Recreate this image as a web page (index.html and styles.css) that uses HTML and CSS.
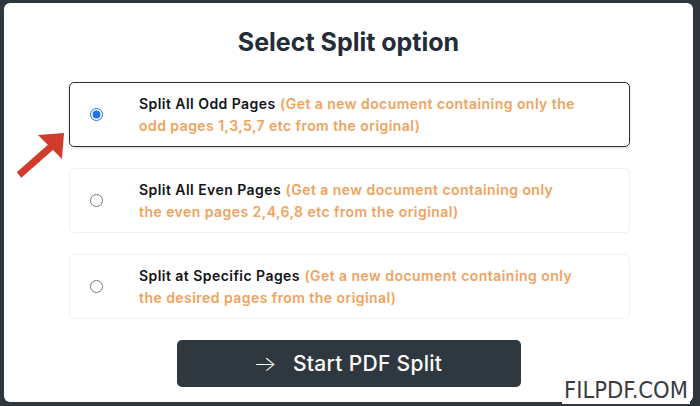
FILE: index.html
```html
<!DOCTYPE html>
<html lang="en">
<head>
    <meta charset="UTF-8">
    <meta name="viewport" content="width=device-width, initial-scale=1.0">
    <title>Select Split option</title>
    <link rel="stylesheet" href="styles.css">
</head>
<body>
    <div class="frame">
        <h1 class="title">Select Split option</h1>

        <div class="options">
            <label class="option selected">
                <input type="radio" name="split" value="odd" checked>
                <span class="option-text">
                    <b>Split All Odd Pages</b> <em>(Get a new document containing only the<br>odd pages 1,3,5,7 etc from the original)</em>
                </span>
            </label>
            <label class="option">
                <input type="radio" name="split" value="even">
                <span class="option-text">
                    <b>Split All Even Pages</b> <em>(Get a new document containing only<br>the even pages 2,4,6,8 etc from the original)</em>
                </span>
            </label>
            <label class="option">
                <input type="radio" name="split" value="specific">
                <span class="option-text">
                    <b>Split at Specific Pages</b> <em>(Get a new document containing only<br>the desired pages from the original)</em>
                </span>
            </label>
        </div>

        <button class="start-btn"><span class="btn-arrow">&rarr;</span> Start PDF Split</button>

        <!-- annotation arrow -->
        <svg class="pointer" width="56" height="50" viewBox="0 0 56 50">
            <path d="M38 15 L5 44" stroke="#d13b2c" stroke-width="7" fill="none"/>
            <polygon points="24,4 50,2 48,28" fill="#d13b2c"/>
        </svg>

        <div class="watermark">FILPDF.COM</div>
    </div>
</body>
</html>
```

FILE: styles.css
```css
body {
    margin: 0;
    height: 406px;
    background-color: #2f363d;
    font-family: Inter, "Noto Sans", sans-serif;
    overflow: hidden;
}
.frame {
    position: relative;
    margin: 3px 7px 0 4px;
    height: 399px;
    background-color: #ffffff;
    border-radius: 6px;
    display: flex;
    flex-direction: column;
    align-items: center;
}
.title {
    margin: 25px 0 0;
    height: 28px;
    line-height: 28px;
    font-size: 25px;
    font-weight: 700;
    color: #232c37;
}
.options {
    margin-top: 26px;
    margin-left: 2px;
    width: 561px;
    display: flex;
    flex-direction: column;
    gap: 21px;
}
.option {
    height: 65px;
    box-sizing: border-box;
    border: 1px solid #eef0f6;
    border-radius: 5px;
    display: flex;
    align-items: center;
    padding-left: 20px;
}
.option.selected {
    border: 1.5px solid #2a2f36;
    box-shadow: 0 1px 3px rgba(0, 0, 0, 0.15);
}
.option input {
    margin: 0;
    width: 13px;
    height: 13px;
    accent-color: #1a73e8;
}
.option-text {
    margin-left: 36px;
    font-size: 14px;
    line-height: 22px;
    letter-spacing: 0.45px;
}
.option-text b {
    font-weight: 600;
    color: #111418;
}
.option-text em {
    font-style: normal;
    font-weight: 600;
    color: #f0a35e;
}
.start-btn {
    margin-top: 21px;
    width: 344px;
    height: 47px;
    border: none;
    border-radius: 5px;
    background-color: #30383f;
    color: #ffffff;
    font-family: Inter, "Noto Sans", sans-serif;
    font-size: 21px;
    font-weight: 500;
    letter-spacing: 0.3px;
    cursor: pointer;
}
.btn-arrow {
    display: inline-block;
    margin-right: 12px;
    font-weight: 200;
    transform: scaleX(1.2);
}
.pointer {
    position: absolute;
    left: 10px;
    top: 128px;
}
.watermark {
    position: absolute;
    right: 3px;
    bottom: -2px;
    padding: 0 2px;
    background-color: #ffffff;
    font-family: "DejaVu Sans Condensed", "DejaVu Sans", sans-serif;
    font-size: 23.5px;
    color: #3a3d40;
}
```
